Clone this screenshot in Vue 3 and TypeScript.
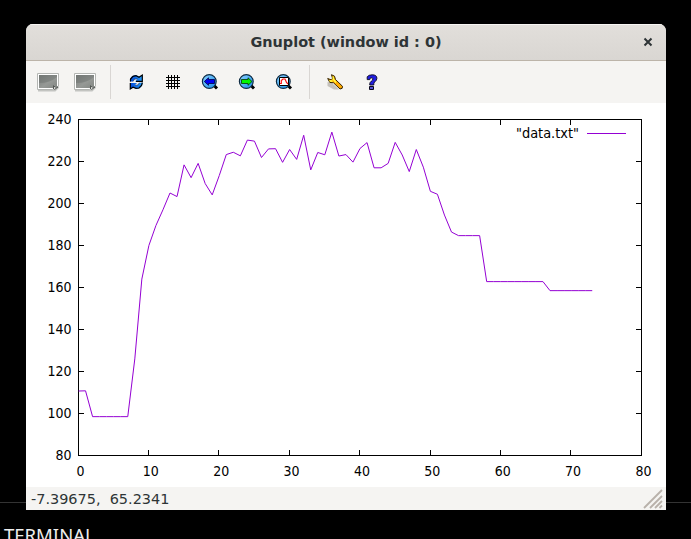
<script setup lang="ts">
const samples: number[] = [
  110.7, 110.8, 98.5, 98.5, 98.5, 98.5, 98.5, 98.5, 126, 164, 180, 189.5, 197, 205, 203.3,
  218.4, 212.3, 219.1, 209.5, 204.1, 213.3, 223.3, 224.4, 222.7, 230.2, 229.7, 221.9, 226,
  226.1, 219.6, 225.7, 221, 232.5, 216, 224.3, 223.2, 234, 222.6, 223.3, 219.7, 226.2, 229,
  217, 217, 219.1, 229.1, 223.1, 215.2, 225.7, 217.3, 205.8, 204.4, 194.5, 186.4, 184.7,
  184.7, 184.7, 184.7, 162.8, 162.8, 162.8, 162.8, 162.8, 162.8, 162.8, 162.8, 162.8, 158.5,
  158.5, 158.5, 158.5, 158.5, 158.5, 158.5,
]
const sx = (v: number): number => 52.5 + (v * 563) / 80
const sy = (v: number): number => 352.5 - (v - 80) * 2.1
const snap = (v: number): number => Math.floor(v) + 0.5
const line = samples.map((v, i) => `${sx(i).toFixed(2)},${sy(v).toFixed(2)}`).join(' ')
const xTicks: number[] = [0, 10, 20, 30, 40, 50, 60, 70, 80]
const yTicks: number[] = [80, 100, 120, 140, 160, 180, 200, 220, 240]
const tools: string[] = ['copy', 'export', 'sep', 'replot', 'grid', 'prev', 'next', 'auto', 'sep', 'config', 'help']
</script>

<template>
  <div class="desktop">
    <div class="rule"></div>
    <div class="terminal">TERMINAL</div>
    <main class="window">
      <header class="title">
        <span>Gnuplot (window id : 0)</span>
        <svg class="close" width="10" height="10" viewBox="0 0 10 10"><path d="M1.5 1.5L8.5 8.5M8.5 1.5L1.5 8.5" /></svg>
      </header>
      <nav class="toolbar">
        <svg width="0" height="0" class="defs">
          <defs>
            <linearGradient id="photo" x1="0" y1="0" x2="1" y2="1"><stop offset="0" stop-color="#777b78" /><stop offset=".55" stop-color="#969996" /><stop offset="1" stop-color="#828682" /></linearGradient>
            <linearGradient id="lens" x1="0" y1="0" x2="1" y2="1"><stop offset="0" stop-color="#8ed4ff" /><stop offset="1" stop-color="#168bec" /></linearGradient>
            <linearGradient id="blue" x1="0" y1="0" x2="1" y2="0"><stop offset="0" stop-color="#0044d5" /><stop offset="1" stop-color="#25a0ff" /></linearGradient>
          </defs>
        </svg>
        <template v-for="(tool, i) in tools" :key="i">
          <i v-if="tool === 'sep'" class="sep"></i>
          <svg v-else class="tool" width="37" height="42" viewBox="0 0 37 42">
            <g v-if="tool === 'copy' || tool === 'export'">
              <path d="M8 29.5H25L28.5 26" fill="none" stroke="#c3c4c1" stroke-width="1.8" />
              <path d="M7.5 12.5H28.5V25L25 28.5H7.5Z" fill="#fff" stroke="#b4b6b3" />
              <path d="M9 14H27V27H9Z" fill="url(#photo)" />
              <path d="M9 22Q20 22 27 16V14H9Z" fill="#6d726e" opacity=".45" />
              <path d="M22.5 29L23.5 24L25 25.5L29 25Z" fill="#cfd0cd" />
              <path d="M23.5 28V24.5L25 26H28L24.5 28.5" fill="none" stroke="#555956" />
            </g>
            <g v-else-if="tool === 'replot'">
              <path d="M12 20.5C12 16.2 14.5 14 18 14.2L21.3 15.6L24.5 14V20.5H17L19.5 18.2C18 17 15.5 17.8 15 20.5Z" fill="url(#blue)" />
              <path d="M24.7 21.7C24.5 26 21.5 28 18.5 27.8L15 26.5L12 28.2V22H19L16.8 24.3C18.5 25 20.5 24 21.5 21.7Z" fill="url(#blue)" />
              <path d="M12.5 20.5V18L15 15.3L18 14.7L21 16.2L24.3 14V20.3H18M24.4 21.5L23.5 24.5L21 27L18 27.4L15 26.2L12.3 28V22" fill="none" stroke="#000" stroke-width="1.2" />
              <path d="M15 20.5L16.5 18L19.5 18M21.5 21.8L19.5 24.2L17 24.3" fill="none" stroke="#001f55" stroke-width=".7" />
            </g>
            <path v-else-if="tool === 'grid'" d="M13.5 14V28M16.5 14V28M19.5 14V28M22.5 14V28M11 16.5H25M11 19.5H25M11 22.5H25M11 25.5H25" stroke="#000" />
            <g v-else-if="tool === 'prev' || tool === 'next' || tool === 'auto'">
              <path d="M22 24.5L25 27.5" stroke="#000" stroke-width="3" />
              <circle cx="17.3" cy="20.5" r="6.9" fill="url(#lens)" stroke="#102c43" stroke-width="1.2" />
              <path v-if="tool === 'prev'" d="M12.3 20.5L16.5 16.8V18.5H22.5V22.5H16.5V24.3Z" fill="#0000f2" stroke="#000045" stroke-width=".8" />
              <path v-else-if="tool === 'next'" d="M23 20.5L19 16.8V18.5H12.5V22.5H19V24.3Z" fill="#00f500" stroke="#003500" stroke-width=".8" />
              <g v-else><path d="M13.5 16.5H22.5V24.5H13.5Z" fill="#fff" stroke="#000" /><path d="M14 22.5H15.3V19.5L17 18H19L20.5 21.5L22 23" fill="none" stroke="#f11" stroke-width="1.2" /></g>
            </g>
            <g v-else-if="tool === 'config'">
              <path d="M10.5 21L15 22L22 28.5H17L10.5 25Z" fill="#aaa69c" opacity=".65" />
              <path d="M14.5 13.7L17.5 15.2L18.5 18.5L25.5 25.3Q26 28 23 28L16.5 21.8L12.8 21.4L10.7 17.5L14 18.8L15.5 17.3Z" fill="#ffa900" stroke="#342300" stroke-width="1" />
              <path d="M16 15.5L16.5 18.5L19 21.5M12.5 19.8L15.5 20.2" stroke="#ff4" stroke-width="1.4" fill="none" />
            </g>
            <g v-else>
              <path d="M13.2 18.6V15.8Q14.7 13.8 18.2 13.8Q22.9 13.8 22.9 17.3Q22.9 19.4 20.6 21Q19.6 21.8 19.8 24H15.7Q15.4 21.4 17.4 20.1Q19.1 19 18.8 17.7Q18.4 16.5 16.9 16.9Q15.8 17.2 15.8 18.6Z" fill="#211ee0" stroke="#09071e" stroke-width=".9" />
              <path d="M15.5 25.5H19.5V28.5H15.5Z" fill="#5451d5" stroke="#09071e" />
            </g>
          </svg>
        </template>
      </nav>
      <svg class="plot" width="640" height="384" viewBox="0 0 640 384">
        <path d="M52.5 16.5H615.5V352.5H52.5Z" class="axis" />
        <g v-for="v in xTicks" :key="'x' + v">
          <path class="axis" :d="`M${snap(sx(v) - 0.3)} 16V22M${snap(sx(v) - 0.3)} 353V347`" />
          <text :x="sx(v) + 2" y="373" text-anchor="middle">{{ v }}</text>
        </g>
        <g v-for="v in yTicks" :key="'y' + v">
          <path class="axis" :d="`M52 ${sy(v)}H58M616 ${sy(v)}H610`" />
          <text x="45.5" :y="Math.floor(sy(v)) + 5" text-anchor="end">{{ v }}</text>
        </g>
        <text x="490" y="35" textLength="63" lengthAdjust="spacingAndGlyphs">"data.txt"</text>
        <path d="M561 30.5H600" class="series" />
        <polyline :points="line" class="series" />
      </svg>
      <footer class="status">
        <span>-7.39675,&nbsp; 65.2341</span>
        <svg width="20" height="20" viewBox="0 0 20 20"><path d="M1 19L19 1M7 19L19 7M12 19L19 12M16.5 19L19 16.5" /></svg>
      </footer>
    </main>
  </div>
</template>

<style>
body { margin: 0; background: #000; overflow: hidden; }
</style>
<style scoped>
.desktop { position: relative; box-sizing: border-box; width: 691px; height: 539px; padding: 24px 25px 0 26px; background: #000; overflow: hidden; font-family: "DejaVu Sans", sans-serif; }
.rule { position: absolute; left: 0; top: 502px; width: 691px; height: 1px; background: #333; }
.terminal { position: absolute; left: 4px; top: 523px; font: 18.5px/24px "Noto Sans", sans-serif; color: #eee; }
.window { position: relative; width: 640px; height: 486px; background: #fff; border-radius: 7px 7px 0 0; overflow: hidden; }
.title { position: relative; box-sizing: border-box; height: 37px; display: flex; align-items: center; justify-content: center; border-bottom: 1px solid #bcb4a9; background: linear-gradient(#e2dfdb, #d9d6d2); box-shadow: inset 0 1px #f7f5f3; color: #2e3436; font-weight: bold; font-size: 14.45px; }
.close { position: absolute; right: 13px; top: 13px; fill: none; stroke: #2e3436; stroke-width: 2; }
.toolbar { box-sizing: border-box; display: flex; height: 42px; padding-left: 4px; background: #f5f4f2; }
.defs { position: absolute; }
.tool { display: block; flex: none; }
.sep { width: 1px; height: 34px; margin: 4px 7px 0 6px; background: #d9d6d3; }
.plot { display: block; font: 14px "DejaVu Sans Condensed", "DejaVu Sans", sans-serif; font-stretch: condensed; }
.axis { fill: none; stroke: #000; stroke-width: 1; }
.series { fill: none; stroke: #9400d3; stroke-width: 1; }
.status { box-sizing: border-box; height: 23px; display: flex; align-items: center; justify-content: space-between; padding: 0 3px 0 5px; background: #f5f4f2; color: #2e3436; font-size: 14.45px; }
.status path { fill: none; stroke: #b8b1aa; stroke-width: 1.8; }
</style>
